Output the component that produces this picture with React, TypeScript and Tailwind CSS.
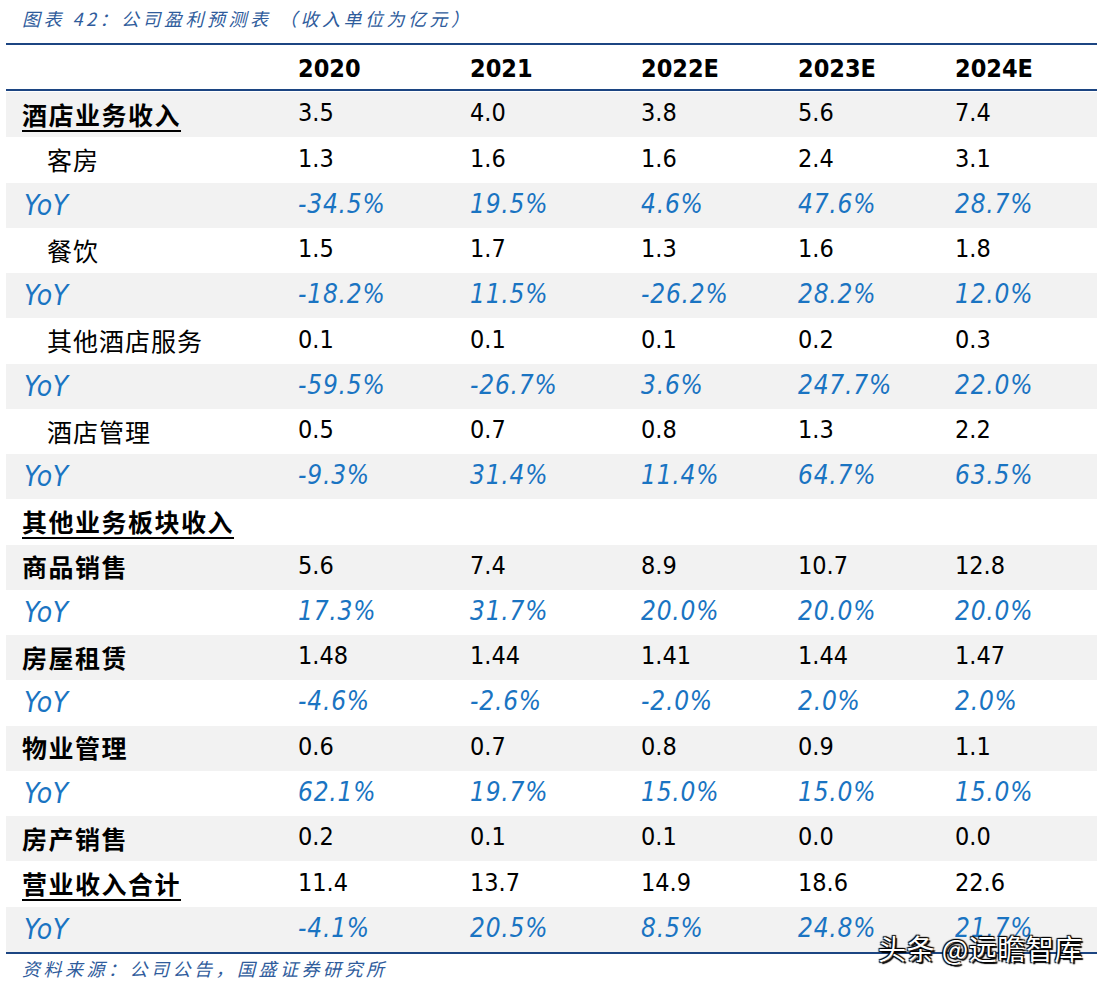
import type { FC } from 'react';

type Row = {
  label: string;
  kind: 'main' | 'sub' | 'yoy' | 'section';
  underline?: boolean;
  values: string[];
};

const years = ['2020', '2021', '2022E', '2023E', '2024E'];

const rows: Row[] = [
  { label: '酒店业务收入', kind: 'main', underline: true, values: ['3.5', '4.0', '3.8', '5.6', '7.4'] },
  { label: '客房', kind: 'sub', values: ['1.3', '1.6', '1.6', '2.4', '3.1'] },
  { label: 'YoY', kind: 'yoy', values: ['-34.5%', '19.5%', '4.6%', '47.6%', '28.7%'] },
  { label: '餐饮', kind: 'sub', values: ['1.5', '1.7', '1.3', '1.6', '1.8'] },
  { label: 'YoY', kind: 'yoy', values: ['-18.2%', '11.5%', '-26.2%', '28.2%', '12.0%'] },
  { label: '其他酒店服务', kind: 'sub', values: ['0.1', '0.1', '0.1', '0.2', '0.3'] },
  { label: 'YoY', kind: 'yoy', values: ['-59.5%', '-26.7%', '3.6%', '247.7%', '22.0%'] },
  { label: '酒店管理', kind: 'sub', values: ['0.5', '0.7', '0.8', '1.3', '2.2'] },
  { label: 'YoY', kind: 'yoy', values: ['-9.3%', '31.4%', '11.4%', '64.7%', '63.5%'] },
  { label: '其他业务板块收入', kind: 'section', underline: true, values: [] },
  { label: '商品销售', kind: 'main', values: ['5.6', '7.4', '8.9', '10.7', '12.8'] },
  { label: 'YoY', kind: 'yoy', values: ['17.3%', '31.7%', '20.0%', '20.0%', '20.0%'] },
  { label: '房屋租赁', kind: 'main', values: ['1.48', '1.44', '1.41', '1.44', '1.47'] },
  { label: 'YoY', kind: 'yoy', values: ['-4.6%', '-2.6%', '-2.0%', '2.0%', '2.0%'] },
  { label: '物业管理', kind: 'main', values: ['0.6', '0.7', '0.8', '0.9', '1.1'] },
  { label: 'YoY', kind: 'yoy', values: ['62.1%', '19.7%', '15.0%', '15.0%', '15.0%'] },
  { label: '房产销售', kind: 'main', values: ['0.2', '0.1', '0.1', '0.0', '0.0'] },
  { label: '营业收入合计', kind: 'main', underline: true, values: ['11.4', '13.7', '14.9', '18.6', '22.6'] },
  { label: 'YoY', kind: 'yoy', values: ['-4.1%', '20.5%', '8.5%', '24.8%', '21.7%'] },
];

const NUM_FONT = "font-['Tahoma','DejaVu_Sans_Condensed','DejaVu_Sans',sans-serif]";
const CJK_FONT = "font-['Noto_Sans_CJK_SC',sans-serif]";

const Label: FC<{ row: Row }> = ({ row }) => {
  if (row.kind === 'yoy') {
    return (
      <span className={`pl-[18px] pt-[1px] text-[28px] italic tracking-[0.5px] text-[#1a74c2] ${NUM_FONT}`}>
        YoY
      </span>
    );
  }
  if (row.kind === 'sub') {
    return (
      <span className={`pl-[41px] text-[25px] tracking-[1px] text-black ${CJK_FONT}`}>
        {row.label}
      </span>
    );
  }
  return (
    <span
      className={
        `pl-[16px] text-[25px] font-bold tracking-[1.5px] text-black ${CJK_FONT} ` +
        (row.underline ? 'underline decoration-2 underline-offset-[5px]' : '')
      }
    >
      {row.label}
    </span>
  );
};

export default function App() {
  return (
    <div className="relative w-[1108px] h-[988px] bg-white overflow-hidden">
      {/* Title */}
      <div className={`h-[43px] pl-[22px] pt-[5px] text-[18px] italic tracking-[3.5px] text-[#2f5c9c] ${CJK_FONT}`}>
        图表 42：公司盈利预测表 （收入单位为亿元）
      </div>

      <div className="ml-[6px] w-[1091px]">
        {/* Header */}
        <div className="border-t-2 border-b-2 border-[#1c4582] grid grid-cols-[292px_172px_171px_157px_157px_142px] h-[48px] items-center">
          <div />
          {years.map((y) => (
            <div key={y} className={`text-[25px] font-bold text-black pt-[4px] ${NUM_FONT}`}>
              {y}
            </div>
          ))}
        </div>

        {/* Body */}
        <div className="pt-[1px]">
          {rows.map((row, i) => (
            <div
              key={i}
              className={
                'grid grid-cols-[292px_172px_171px_157px_157px_142px] h-[45.26px] items-center ' +
                (i % 2 === 0 ? 'bg-[#f2f2f2]' : 'bg-white')
              }
            >
              <div className="flex items-center">
                <Label row={row} />
              </div>
              {row.values.map((v, j) => (
                <div
                  key={j}
                  className={
                    `pb-[3px] ${NUM_FONT} ` +
                    (row.kind === 'yoy'
                      ? 'text-[26px] italic tracking-[0.8px] text-[#1a74c2] pt-[1px]'
                      : 'text-[25px] text-black')
                  }
                >
                  {v}
                </div>
              ))}
            </div>
          ))}
        </div>
        <div className="border-t-2 border-[#1c4582]" />
      </div>

      {/* Source */}
      <div className={`pl-[22px] pt-[1px] text-[18px] italic tracking-[3.5px] text-[#2f5c9c] ${CJK_FONT}`}>
        资料来源：公司公告，国盛证券研究所
      </div>

      {/* Watermark */}
      <div className={`absolute left-[878px] top-[927px] text-[28px] tracking-[0.5px] text-white ${CJK_FONT} [text-shadow:2px_2px_1px_#000,-1px_-1px_1px_#000,1px_-1px_1px_#000,-1px_1px_1px_#000]`}>
        头条 @远瞻智库
      </div>
    </div>
  );
}
